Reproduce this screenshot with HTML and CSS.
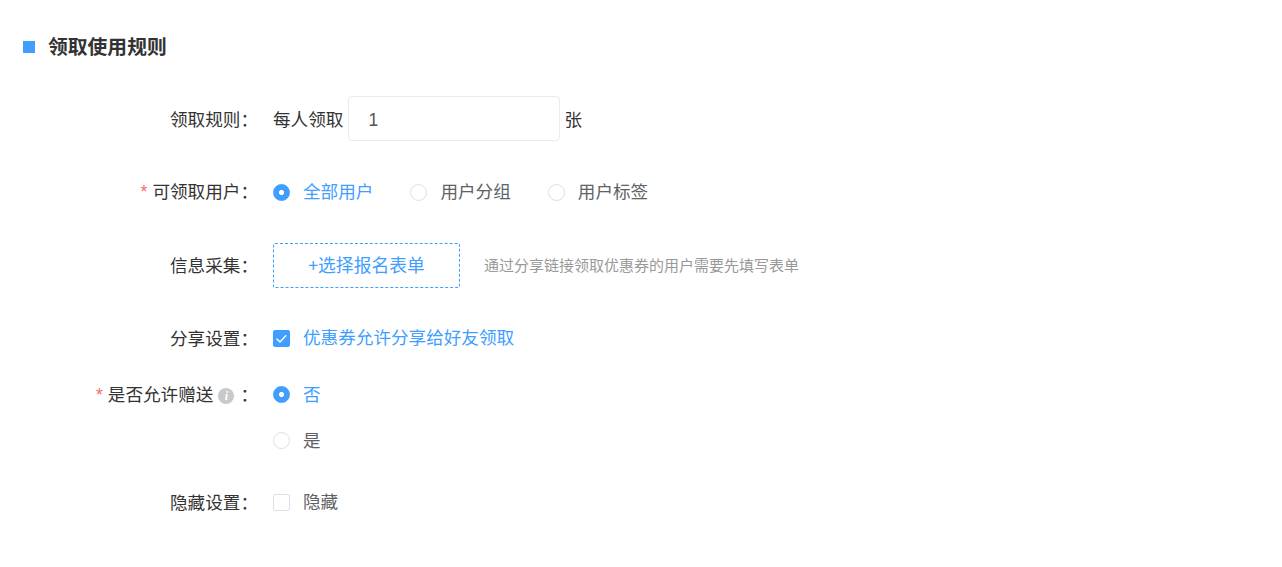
FILE: index.html
```html
<!DOCTYPE html>
<html lang="zh">
<head>
<meta charset="utf-8">
<title>领取使用规则</title>
<link rel="stylesheet" href="styles.css">
</head>
<body>
<section class="panel">
  <h2 class="title"><span class="mark"></span>领取使用规则</h2>
  <form class="form">
    <div class="row row-first">
      <div class="label">领取规则：</div>
      <div class="control">
        <span class="plain">每人领取</span>
        <span class="input">1</span>
        <span class="plain">张</span>
      </div>
    </div>
    <div class="row">
      <div class="label"><i class="req">*</i>可领取用户：</div>
      <div class="control radios">
        <span class="opt on"><span class="radio"></span>全部用户</span>
        <span class="opt"><span class="radio"></span>用户分组</span>
        <span class="opt"><span class="radio"></span>用户标签</span>
      </div>
    </div>
    <div class="row">
      <div class="label">信息采集：</div>
      <div class="control">
        <span class="picker">+选择报名表单</span>
        <span class="hint">通过分享链接领取优惠券的用户需要先填写表单</span>
      </div>
    </div>
    <div class="row row-short">
      <div class="label">分享设置：</div>
      <div class="control">
        <span class="opt on"><span class="check"><svg viewBox="0 0 17 17" width="17" height="17"><path d="M3.6 8.7l3.4 3.2 6.2-6.6" fill="none" stroke="#fff" stroke-width="1.4"/></svg></span>优惠券允许分享给好友领取</span>
      </div>
    </div>
    <div class="row row-stack">
      <div class="label"><i class="req">*</i>是否允许赠送<span class="info">i</span>：</div>
      <div class="control stack">
        <span class="opt on"><span class="radio"></span>否</span>
        <span class="opt"><span class="radio"></span>是</span>
      </div>
    </div>
    <div class="row row-last">
      <div class="label">隐藏设置：</div>
      <div class="control">
        <span class="opt"><span class="check"></span>隐藏</span>
      </div>
    </div>
  </form>
</section>
</body>
</html>
```
FILE: styles.css
```css
* { box-sizing: border-box; }
html, body { margin: 0; padding: 0; background: #fff; }
body {
  width: 1282px;
  height: 567px;
  overflow: hidden;
  font-family: "Noto Sans CJK SC", "Liberation Sans", sans-serif;
  font-size: 17.6px;
  color: #333;
}
.panel { padding: 32px 0 0 23px; }
.title {
  display: flex;
  align-items: center;
  height: 26px;
  margin: 0;
  font-size: 19.8px;
  line-height: 25px;
  font-weight: 700;
  color: #333;
}
.mark { width: 12px; height: 12px; margin: 4px 13px 0 0; background: #409eff; }
.form { display: block; }
.row { display: flex; align-items: center; height: 45px; margin-bottom: 28px; }
.row-first { margin-top: 38px; }
.row-short { margin-bottom: 12px; }
.row-stack { align-items: flex-start; height: 92px; margin-bottom: 15px; }
.label {
  flex: none;
  width: 235px;
  padding-bottom: 1px;
  text-align: right;
  font-size: 17.6px;
  line-height: 43px;
  white-space: nowrap;
  color: #333;
}
.control { display: flex; align-items: center; margin-left: 15px; white-space: nowrap; }
.req { margin-right: 5px; font-style: normal; color: #f56c6c; font-family: "Liberation Sans", sans-serif; font-size: 17.6px; }
.input {
  width: 212px;
  height: 45px;
  margin: 0 4px 0 5px;
  padding-left: 19px;
  line-height: 46px;
  border: 1px solid #e9ebef;
  border-radius: 4px;
  color: #555;
  font-family: "Liberation Sans", sans-serif;
}
.radios { gap: 37px; }
.opt { display: inline-flex; align-items: center; padding-bottom: 2px; line-height: 22px; color: #606266; }
.opt.on { color: #409eff; }
.radio {
  width: 17px;
  height: 17px;
  margin: 4px 13px 0 0;
  border: 1px solid #dcdfe6;
  border-radius: 50%;
  background: #fff;
}
.opt.on .radio {
  border-color: #409eff;
  background: radial-gradient(circle, #fff 0 2.2px, #409eff 2.9px);
}
.check {
  display: block;
  width: 17px;
  height: 17px;
  margin: 4px 13px 0 0;
  border: 1px solid #dcdfe6;
  border-radius: 2px;
  background: #fff;
}
.check svg { display: block; margin: -1px; }
.opt.on .check { border-color: #409eff; background: #409eff; }
.picker {
  width: 187px;
  height: 45px;
  margin-top: 1px;
  line-height: 41px;
  text-align: center;
  font-size: 17.8px;
  border: 1px dashed #409eff;
  border-radius: 2px;
  color: #409eff;
}
.hint { margin-left: 24px; font-size: 15px; color: #999; }
.info {
  display: inline-block;
  width: 16px;
  height: 16px;
  margin: 0 6px 0 5px;
  border-radius: 50%;
  background: #c8c9cc;
  color: #fff;
  font: italic 700 12px/16px "Liberation Serif", serif;
  text-align: center;
  vertical-align: 1px;
}
.stack { flex-direction: column; align-items: flex-start; gap: 22px; padding-top: 11px; }
.stack .radio { margin-top: 1px; }
.row-stack .label { line-height: 43px; }
```
